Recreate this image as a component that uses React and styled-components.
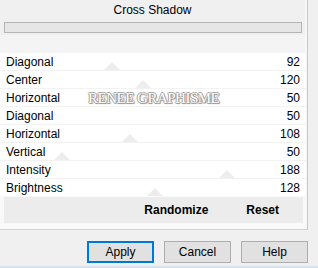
import React from "react";
import styled, { createGlobalStyle } from "styled-components";

const Global = createGlobalStyle`
  html, body { margin: 0; padding: 0; background: #f0f0f0; }
  body { font-family: "Liberation Sans", Arial, sans-serif; font-size: 12px; color: #000; }
`;

const Window = styled.div`
  width: 318px;
  height: 268px;
  display: flex;
  flex-direction: column;
  background: #f0f0f0;
  overflow: hidden;
`;

const Top = styled.div`
  display: flex;
  height: 230px;
`;

const Panel = styled.div`
  width: 305px;
  padding-right: 2px;
  border-right: 1px solid #c8c8c8;
  border-bottom: 1px solid #d4d4d4;
  background: #f8f8f8;
  display: flex;
  flex-direction: column;
`;

const Gutter = styled.div`
  flex: 1;
  background: #f0f0f0;
`;

const Title = styled.div`
  height: 20px;
  line-height: 20px;
  text-align: center;
  background: #f0f0f0;
  font-size: 12px;
`;

const BarZone = styled.div`
  height: 15px;
  padding: 2px 3px 0 4px;
  background: #f0f0f0;
  box-sizing: border-box;
`;

const Bar = styled.div`
  height: 11px;
  box-sizing: border-box;
  background: #e6e6e6;
  border: 1px solid #b4b4b4;
`;

const Spacer = styled.div`
  height: 18px;
  background: #f4f4f4;
`;

const List = styled.div`
  position: relative;
  display: flex;
  flex-direction: column;
  gap: 1px;
  background: #f2f2f2;
`;

const Row = styled.div`
  position: relative;
  height: 17px;
  background: #fff;
  display: flex;
  align-items: center;
  justify-content: space-between;
  padding: 0 5px 0 6px;
`;

const Label = styled.span`
  position: relative;
  z-index: 1;
`;

const Value = styled.span`
  position: relative;
  z-index: 1;
`;

const Thumb = styled.div`
  position: absolute;
  bottom: 0;
  width: 0;
  height: 0;
  border-left: 8px solid transparent;
  border-right: 8px solid transparent;
  border-bottom: 8px solid #ededed;
`;

const Watermark = styled.div`
  position: absolute;
  left: 88px;
  top: 37px;
  z-index: 2;
  font-family: "Liberation Serif", "Times New Roman", serif;
  font-size: 15px;
  letter-spacing: -0.5px;
  color: #fff;
  text-shadow: -1px 0 0 #a0a0a0, 0 -1px 0 #a0a0a0, 1px 0 0 #a0a0a0, 0 1px 0 #a0a0a0, 1px 1px 1px #808080;
  pointer-events: none;
`;

const ActionZone = styled.div`
  height: 33px;
  padding: 1px 2px 6px 4px;
  box-sizing: border-box;
  background: #f9f9f9;
`;

const ActionBar = styled.div`
  height: 26px;
  background: #ececec;
  display: flex;
  align-items: center;
  justify-content: flex-end;
  padding-right: 24px;
  gap: 38px;
`;

const FlatButton = styled.button`
  border: none;
  background: transparent;
  font: bold 12px "Liberation Sans", Arial, sans-serif;
  padding: 0;
  color: #000;
`;

const Footer = styled.div`
  flex: 1;
  display: flex;
  justify-content: flex-end;
  align-items: flex-start;
  gap: 10px;
  padding: 11px 10px 0 0;
  border-bottom: 2px solid #d6e2ee;
`;

const Button = styled.button`
  width: 67px;
  height: 22px;
  box-sizing: border-box;
  background: #e1e1e1;
  border: ${(p) => (p.$primary ? "2px solid #0078d7" : "1px solid #adadad")};
  font: 12px "Liberation Sans", Arial, sans-serif;
  color: #000;
  padding: 0;
`;

const rows = [
  { label: "Diagonal", value: 92, thumb: 104 },
  { label: "Center", value: 120, thumb: 135 },
  { label: "Horizontal", value: 50, thumb: null },
  { label: "Diagonal", value: 50, thumb: null },
  { label: "Horizontal", value: 108, thumb: 122 },
  { label: "Vertical", value: 50, thumb: 54 },
  { label: "Intensity", value: 188, thumb: 219 },
  { label: "Brightness", value: 128, thumb: 147 },
];

export default function App() {
  return (
    <>
      <Global />
      <Window>
        <Top>
          <Panel>
            <Title>Cross Shadow</Title>
            <BarZone>
              <Bar />
            </BarZone>
            <Spacer />
            <List>
              {rows.map((r, i) => (
                <Row key={i}>
                  {r.thumb !== null && <Thumb style={{ left: r.thumb }} />}
                  <Label>{r.label}</Label>
                  <Value>{r.value}</Value>
                </Row>
              ))}
              <Watermark>RENEE GRAPHISME</Watermark>
            </List>
            <ActionZone>
              <ActionBar>
                <FlatButton>Randomize</FlatButton>
                <FlatButton>Reset</FlatButton>
              </ActionBar>
            </ActionZone>
          </Panel>
          <Gutter />
        </Top>
        <Footer>
          <Button $primary>Apply</Button>
          <Button>Cancel</Button>
          <Button>Help</Button>
        </Footer>
      </Window>
    </>
  );
}
